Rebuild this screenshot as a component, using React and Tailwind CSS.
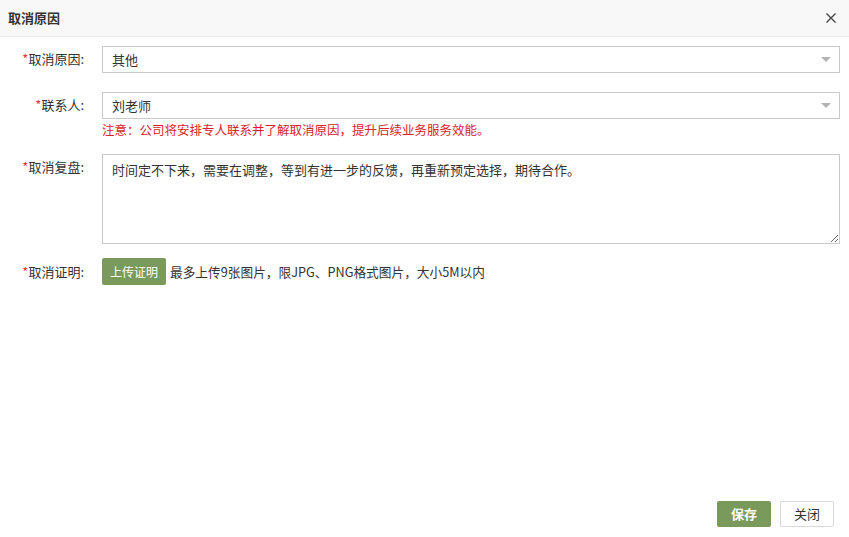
import React from 'react';

const font = { fontFamily: '"Microsoft YaHei", "Noto Sans CJK SC", "Liberation Sans", sans-serif' };

function Label({ children }) {
  return (
    <div className="w-[90px] shrink-0 pr-[6px] text-right text-[13px] text-[#333] leading-[26px]">
      <span className="text-[#e4393c]">*</span>{children}
    </div>
  );
}

function Select({ value }) {
  return (
    <div className="relative h-[27px] flex-1 border border-[#c9c9c9] bg-white pl-[9px] text-[13px] leading-[25px] text-[#333]">
      {value}
      <span className="absolute right-[8px] top-[10px] h-0 w-0 border-x-[5px] border-t-[5px] border-x-transparent border-t-[#b3b3b3]" />
    </div>
  );
}

export default function App() {
  return (
    <div className="flex h-[537px] w-[849px] flex-col bg-white" style={font}>
      <div className="flex h-[37px] shrink-0 items-center justify-between border-b border-[#eee] bg-[#f8f8f8] pl-[8px] pr-[12px]">
        <span className="text-[13px] font-bold text-[#333]">取消原因</span>
        <svg width="12" height="12" viewBox="0 0 12 12" className="text-[#444]">
          <path d="M1.5 1.5L10.5 10.5M10.5 1.5L1.5 10.5" stroke="currentColor" strokeWidth="1.4" />
        </svg>
      </div>

      <div className="flex-1 pr-[9px] pt-[9px]">
        <div className="flex items-start">
          <Label>取消原因:</Label>
          <div className="ml-[12px] flex flex-1"><Select value="其他" /></div>
        </div>

        <div className="mt-[19px] flex items-start">
          <Label>联系人:</Label>
          <div className="ml-[12px] flex flex-1 flex-col">
            <Select value="刘老师" />
            <div className="mt-[2px] text-[12.5px] leading-[18px] text-[#d9232a]">注意：公司将安排专人联系并了解取消原因，提升后续业务服务效能。</div>
          </div>
        </div>

        <div className="mt-[15px] flex items-start">
          <Label>取消复盘:</Label>
          <textarea
            className="ml-[12px] h-[90px] flex-1 resize-y border border-[#c9c9c9] px-[9px] py-[5px] text-[13px] leading-[20px] text-[#333] outline-none"
            style={font}
            defaultValue="时间定不下来，需要在调整，等到有进一步的反馈，再重新预定选择，期待合作。"
          />
        </div>

        <div className="mt-[14px] flex items-center">
          <Label>取消证明:</Label>
          <button className="ml-[12px] h-[27px] w-[64px] rounded-[2px] bg-[#7a9a5c] text-[12px] text-white">上传证明</button>
          <span className="ml-[4px] text-[12.7px] text-[#333]">最多上传9张图片，限JPG、PNG格式图片，大小5M以内</span>
        </div>
      </div>

      <div className="flex shrink-0 justify-end gap-[9px] pb-[10px] pr-[15px]">
        <button className="h-[26px] w-[54px] rounded-[2px] bg-[#7a9a5c] text-[13px] font-bold text-white">保存</button>
        <button className="h-[26px] w-[54px] rounded-[2px] border border-[#d9d9d9] bg-white text-[13px] text-[#333]">关闭</button>
      </div>
    </div>
  );
}
